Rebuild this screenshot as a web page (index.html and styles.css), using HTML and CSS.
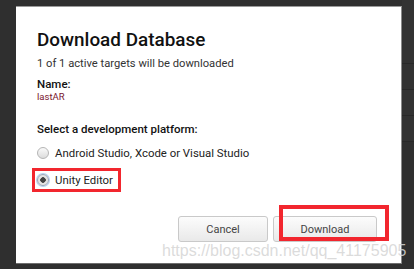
FILE: index.html
```html
<!DOCTYPE html>
<html lang="en">
<head>
    <meta charset="UTF-8">
    <meta name="viewport" content="width=device-width, initial-scale=1.0">
    <title>Download Database</title>
    <link rel="stylesheet" href="styles.css">
</head>
<body>
    <div class="screen">
        <div class="dialog">
            <h1 class="title">Download Database</h1>
            <p class="summary">1 of 1 active targets will be downloaded</p>

            <div class="target">
                <div class="label">Name:</div>
                <div class="value">lastAR</div>
            </div>

            <div class="platform">
                <div class="label">Select a development platform:</div>
                <label class="option"><span class="radio"></span>Android Studio, Xcode or Visual Studio</label>
                <label class="option checked marked"><span class="radio"></span>Unity Editor</label>
            </div>

            <div class="actions">
                <button class="btn">Cancel</button>
                <button class="btn">Download</button>
                <span class="mark-box"></span>
            </div>
        </div>

        <div class="side">
            <div class="side-row tall"></div>
            <div class="side-row"></div>
            <div class="side-row"></div>
            <div class="side-row"></div>
        </div>

        <div class="watermark">https://blog.csdn.net/qq_41175905</div>
    </div>
</body>
</html>
```

FILE: styles.css
```css
/* 基本 */
* {
    box-sizing: border-box;
}
body {
    margin: 0;
    background-color: #2f2f2f;
    font-family: Roboto, 'Liberation Sans', sans-serif;
    color: #222;
}

.screen {
    position: relative;
    display: flex;
    height: 269px;
    padding: 6px 0 0 16px;
}

/* ダイアログ */
.dialog {
    width: 386px;
    height: 258px;
    background-color: #fff;
    border-right: 1px solid #8a8a8a;
    border-bottom: 1px solid #6e6e6e;
    border-top: 1px solid #9a9a9a;
    padding: 0 24px 0 21px;
    display: flex;
    flex-direction: column;
}

.title {
    margin: 21px 0 0;
    font-size: 18.9px;
    font-weight: 500;
    line-height: 24px;
    color: #111;
}

.summary {
    margin: 5px 0 0;
    font-size: 11.2px;
    line-height: 14px;
    color: #333;
}

.label {
    font-size: 11.5px;
    font-weight: 500;
    line-height: 15px;
    color: #111;
}

.target {
    margin-top: 6px;
}
.value {
    margin-top: -2px;
    font-size: 9.5px;
    line-height: 13px;
    color: #7a1530;
}

.platform {
    margin-top: 19px;
    display: flex;
    flex-direction: column;
    align-items: flex-start;
}

/* ラジオ */
.option {
    display: flex;
    align-items: center;
    gap: 6px;
    font-size: 11.4px;
    line-height: 16px;
    color: #222;
    margin-top: 8px;
}
.radio {
    width: 12px;
    height: 12px;
    border-radius: 50%;
    border: 1px solid #b5b5b5;
    background: linear-gradient(#fafafa, #dcdcdc);
}
.option.checked .radio {
    background: radial-gradient(circle, #444 0 2.5px, #e4e4e4 3px);
    border-color: #9aa6b8;
    box-shadow: 0 0 0 1px #b8d0f0;
}
.option.marked {
    margin: 7px 0 0 -5px;
    border: 3px solid #f2262e;
    padding: 1px 5px 1px 2px;
}

/* ボタン */
.actions {
    position: relative;
    margin-top: auto;
    margin-bottom: 21px;
    display: flex;
    justify-content: flex-end;
    gap: 5px;
}
.btn {
    height: 26px;
    width: 90px;
    border: 1px solid #c9c9c9;
    border-radius: 3px;
    background: linear-gradient(#fcfcfc, #e9e9e9);
    font-family: Roboto, 'Liberation Sans', sans-serif;
    font-size: 11px;
    color: #444;
    padding: 0;
}
.btn + .btn {
    width: 104px;
}
.mark-box {
    position: absolute;
    right: -12px;
    top: -11px;
    width: 110px;
    height: 36px;
    border: 4px solid #f2262e;
}

/* 右側 */
.side {
    flex: 1;
    display: flex;
    flex-direction: column;
    margin-top: -6px;
}
.side-row {
    height: 26px;
    border-bottom: 1px solid #282828;
    background-color: #323232;
}
.side-row.tall {
    height: 64px;
}

/* 透かし */
.watermark {
    position: absolute;
    left: 162px;
    top: 242px;
    font-family: 'Liberation Sans', Arial, sans-serif;
    font-size: 16px;
    line-height: 18px;
    color: rgba(213, 213, 213, 0.85);
    white-space: nowrap;
}
```
